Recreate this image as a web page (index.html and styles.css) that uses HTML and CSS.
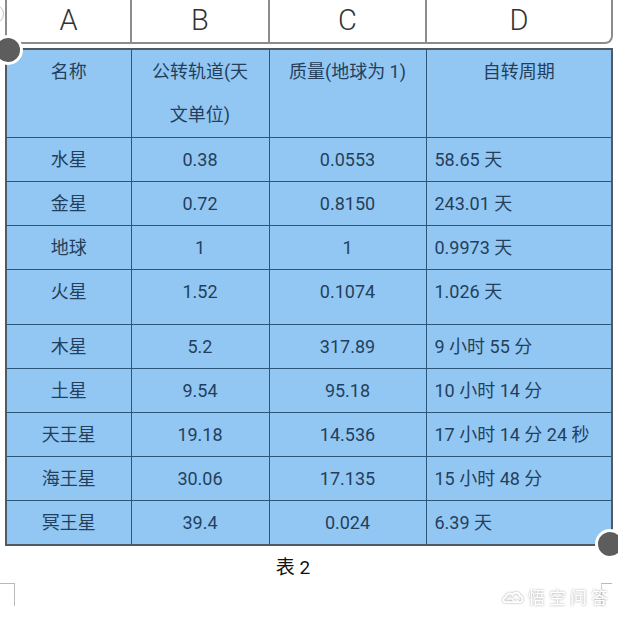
FILE: index.html
```html
<!DOCTYPE html>
<html lang="zh">
<head>
<meta charset="utf-8">
<title>表 2</title>
<link rel="stylesheet" href="styles.css">
</head>
<body>
<div class="page">
  <div class="colhead">
    <div class="ch">A</div>
    <div class="ch">B</div>
    <div class="ch">C</div>
    <div class="ch last">D</div>
  </div>
  <table class="planets">
    <colgroup>
      <col class="c1"><col class="c2"><col class="c3"><col class="c4">
    </colgroup>
    <tr class="head">
      <td>名称</td>
      <td>公转轨道(天<br>文单位)</td>
      <td>质量(地球为 1)</td>
      <td>自转周期</td>
    </tr>
    <tr><td>水星</td><td>0.38</td><td>0.0553</td><td class="l">58.65 天</td></tr>
    <tr><td>金星</td><td>0.72</td><td>0.8150</td><td class="l">243.01 天</td></tr>
    <tr><td>地球</td><td>1</td><td>1</td><td class="l">0.9973 天</td></tr>
    <tr class="tall"><td>火星</td><td>1.52</td><td>0.1074</td><td class="l">1.026 天</td></tr>
    <tr><td>木星</td><td>5.2</td><td>317.89</td><td class="l">9 小时 55 分</td></tr>
    <tr><td>土星</td><td>9.54</td><td>95.18</td><td class="l">10 小时 14 分</td></tr>
    <tr><td>天王星</td><td>19.18</td><td>14.536</td><td class="l">17 小时 14 分 24 秒</td></tr>
    <tr><td>海王星</td><td>30.06</td><td>17.135</td><td class="l">15 小时 48 分</td></tr>
    <tr><td>冥王星</td><td>39.4</td><td>0.024</td><td class="l">6.39 天</td></tr>
  </table>
  <div class="caption">表 2</div>

  <span class="handle tl"></span>
  <span class="handle br"></span>
  <span class="ghost"></span>
  <span class="bracket left"></span>
  <span class="bracket right"></span>
  <div class="watermark">
    <svg class="wm-icon" width="22" height="16" viewBox="0 0 26 18" aria-hidden="true">
      <path d="M4 15 C1 15 1 10 4.5 9.5 C4.5 5 10 3.5 12.5 6.5 C14 3 20 3 21 7.5 C25 8 25 15 21.5 15 Z" fill="none" stroke="#ffffff" stroke-width="2.2"/>
      <path d="M7 12.5 C9 10 11 10 13 12.5 C15 15 17 15 19 12.5" fill="none" stroke="#ffffff" stroke-width="2"/>
    </svg>
    <span class="wm-text">悟空问答</span>
  </div>
</div>
</body>
</html>
```

FILE: styles.css
```css
html, body {
  margin: 0;
  padding: 0;
  background: #ffffff;
}

.page {
  position: relative;
  width: 618px;
  height: 618px;
  overflow: hidden;
  font-family: Roboto, "Noto Sans CJK SC", "Noto Sans", sans-serif;
}

.colhead {
  display: grid;
  grid-template-columns: 125px 138px 157px 186px;
  margin-left: 5px;
  width: 608px;
  height: 44px;
  box-sizing: border-box;
  border-left: 2px solid #8c8c8c;
}

.ch {
  box-sizing: border-box;
  border-right: 2px solid #8c8c8c;
  border-bottom: 2px solid #8c8c8c;
  display: flex;
  align-items: center;
  justify-content: center;
  font-family: Roboto, "Liberation Sans", sans-serif;
  font-weight: 300;
  font-size: 29px;
  color: #333333;
  padding-bottom: 2px;
}

.ch.last {
  border-bottom-right-radius: 8px;
}

.planets {
  margin-top: 4px;
  margin-left: 5px;
  width: 608px;
  border-collapse: collapse;
  border: 2px solid #505a62;
  background: #93c7f3;
  table-layout: fixed;
}

.c1 { width: 125px; }
.c2 { width: 138px; }
.c3 { width: 157px; }
.c4 { width: 186px; }

.planets td {
  border: 1px solid #2b5677;
  padding: 0;
  height: 43px;
  vertical-align: top;
  text-align: center;
  font-size: 18px;
  line-height: 43px;
  color: #243f5c;
  white-space: nowrap;
}

.planets tr.head td {
  height: 87px;
}

.planets tr.tall td {
  height: 54px;
}

.planets td.l {
  text-align: left;
  padding-left: 8px;
}

.caption {
  padding-top: 6px;
  padding-right: 32px;
  text-align: center;
  font-size: 19px;
  color: #111111;
  font-family: Roboto, "Noto Sans CJK SC", sans-serif;
}

.handle {
  position: absolute;
  width: 24px;
  height: 24px;
  border-radius: 50%;
  background: #5d5d5d;
  border: 3px solid #ffffff;
}

.handle.tl {
  left: -7px;
  top: 35px;
}

.handle.br {
  left: 595px;
  top: 529px;
}

.ghost {
  position: absolute;
  left: -16px;
  top: 4px;
  width: 18px;
  height: 18px;
  border-radius: 50%;
  border: 1.5px solid #c4c4c4;
}

.bracket {
  position: absolute;
  width: 14px;
  height: 22px;
  border-top: 1.5px solid #b9b9b9;
}

.bracket.left {
  left: 0;
  top: 583px;
  border-right: 1.5px solid #b9b9b9;
}

.bracket.right {
  left: 601px;
  top: 583px;
  width: 10px;
  border-left: 1.5px solid #d0d0d0;
}

.watermark {
  position: absolute;
  left: 502px;
  top: 586px;
  display: flex;
  align-items: center;
  gap: 4px;
  white-space: nowrap;
  filter: drop-shadow(0 0 1px rgba(90, 90, 90, 0.55));
}

.wm-text {
  font-family: "Noto Sans CJK SC", sans-serif;
  font-size: 17px;
  line-height: 22px;
  letter-spacing: 4px;
  color: #ffffff;
}
```
